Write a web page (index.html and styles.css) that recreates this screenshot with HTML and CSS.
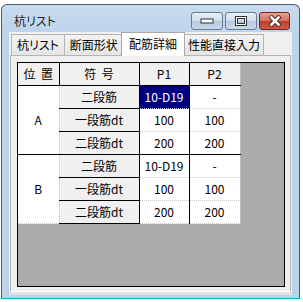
FILE: index.html
```html
<!DOCTYPE html>
<html lang="ja">
<head>
  <meta charset="UTF-8" />
  <title>杭リスト</title>
  <link rel="stylesheet" href="styles.css">
</head>
<body>
  <div class="window">
    <div class="titlebar">
      <div class="title">杭リスト</div>
      <div class="caption-btns">
        <div class="cbtn">
          <svg width="14" height="8" viewBox="0 0 14 8"><rect x="1" y="2" width="12" height="4" fill="#fff" stroke="#333" stroke-width="1"/></svg>
        </div>
        <div class="cbtn">
          <svg width="14" height="10" viewBox="0 0 14 10"><rect x="2.5" y="1.5" width="9" height="7" fill="none" stroke="#333" stroke-width="3"/><rect x="2.5" y="1.5" width="9" height="7" fill="none" stroke="#fff" stroke-width="1"/></svg>
        </div>
        <div class="cbtn close">
          <svg width="16" height="12" viewBox="0 0 16 12"><path d="M3 1 L13 11 M13 1 L3 11" stroke="#4a1a12" stroke-width="4.5"/><path d="M3.5 1.5 L12.5 10.5 M12.5 1.5 L3.5 10.5" stroke="#fff" stroke-width="2.5"/></svg>
        </div>
      </div>
    </div>
    <div class="client">
      <div class="tabs">
        <div class="tab">杭リスト</div>
        <div class="tab">断面形状</div>
        <div class="tab active">配筋詳細</div>
        <div class="tab last">性能直接入力</div>
      </div>
      <div class="panel">
        <div class="grid">
          <table>
            <colgroup>
              <col class="c-pos"><col class="c-sym"><col class="c-p"><col class="c-p2">
            </colgroup>
            <tr class="head">
              <th><span class="wide">位 置</span></th><th><span class="wide">符 号</span></th><th>P1</th><th>P2</th>
            </tr>
            <tr>
              <td class="pos end" rowspan="3">A</td>
              <td class="sym">二段筋</td>
              <td class="p1 sel">10-D19</td>
              <td class="p2">-</td>
            </tr>
            <tr>
              <td class="sym">一段筋dt</td>
              <td class="p1">100</td>
              <td class="p2">100</td>
            </tr>
            <tr class="group-end">
              <td class="sym">二段筋dt</td>
              <td class="p1">200</td>
              <td class="p2">200</td>
            </tr>
            <tr>
              <td class="pos" rowspan="3">B</td>
              <td class="sym">二段筋</td>
              <td class="p1">10-D19</td>
              <td class="p2">-</td>
            </tr>
            <tr>
              <td class="sym">一段筋dt</td>
              <td class="p1">100</td>
              <td class="p2">100</td>
            </tr>
            <tr>
              <td class="sym">二段筋dt</td>
              <td class="p1">200</td>
              <td class="p2">200</td>
            </tr>
          </table>
        </div>
      </div>
    </div>
  </div>
</body>
</html>
```

FILE: styles.css
```css
html, body {
  margin: 0;
  padding: 0;
  background: #ffffff;
  font-family: "Noto Sans CJK JP", sans-serif;
  font-size: 12px;
  font-feature-settings: "palt";
  color: #000;
}
.window {
  margin: 4px 0 0 1px;
  width: 297px;
  height: 293px;
  border: 1px solid #4a5d74;
  border-bottom-color: #1aa6c8;
  border-radius: 6px 6px 0 0;
  background: linear-gradient(#c9dbee, #bcd3ec 30px, #bcd3ec);
  display: flex;
  flex-direction: column;
}
.titlebar {
  height: 27px;
  display: flex;
  justify-content: space-between;
  align-items: flex-start;
  padding: 0 9px 0 12px;
}
.title {
  padding-top: 7px;
  color: #1e1e1e;
  font-size: 12px;
}
.caption-btns {
  display: flex;
  gap: 2px;
  margin-top: 7px;
}
.cbtn {
  width: 30px;
  height: 16px;
  border: 1px solid #6b7c92;
  border-radius: 3px;
  background: linear-gradient(#e8f0f8, #cfdcec 50%, #b7c9df 51%, #c9d9ec);
  display: flex;
  align-items: center;
  justify-content: center;
}
.cbtn.close {
  width: 29px;
  border-color: #6e2a22;
  background: linear-gradient(#e7a293, #d1705c 50%, #bd3f2a 51%, #cc5b44);
}
.client {
  margin: 0 7px 0 7px;
  height: 259px;
  background: #f0f0f0;
  display: flex;
  flex-direction: column;
  padding: 1px 1px 0 1px;
  border-bottom: 3px solid #e3e3e3;
}
.tabs {
  display: flex;
  align-items: flex-end;
  height: 22px;
  padding-left: 1px;
  position: relative;
  z-index: 1;
}
.tab {
  height: 20px;
  line-height: 19px;
  padding: 0 5px;
  border: 1px solid #b4b4b4;
  border-bottom: none;
  margin-right: -1px;
  background: linear-gradient(#f3f3f3, #e5e5e5);
}
.tab.last {
  padding: 0 3px;
}
.tab.active {
  height: 23px;
  line-height: 21px;
  margin: 0 -1px 0 -2px;
  padding: 0 7px;
  background: #ffffff;
  border-color: #a9a9a9;
  position: relative;
  top: 1px;
}
.panel {
  flex: 1;
  border: 1px solid #b4b4b4;
  border-bottom: 1px solid #ffffff;
  background: #f0f0f0;
  padding: 6px 5px 4px 6px;
  display: flex;
}
.grid {
  flex: 1;
  border: 1px solid #000;
  background: #ababab;
}
table {
  border-collapse: collapse;
  table-layout: fixed;
  width: 222px;
  text-align: center;
}
.c-pos { width: 41px; }
.c-sym { width: 80px; }
.c-p { width: 50px; }
.c-p2 { width: 51px; }
th, td {
  height: 22px;
  padding: 0;
  font-weight: normal;
  white-space: nowrap;
  line-height: 18px;
}
th .wide {
  word-spacing: 3px;
}
th {
  background: #f0f0f0;
  border-right: 1px solid #000;
  border-bottom: 1px solid #000;
}
th:last-child {
  border-right: 1px dotted #c8c8c8;
}
td {
  background: #ffffff;
  border-bottom: 1px dotted #c8c8c8;
  border-right: 1px dotted #c8c8c8;
}
td.pos.end {
  border-bottom: 1px solid #000;
}
td.sym {
  background: #f0f0f0;
  border-right: 1px solid #000;
  border-bottom: 1px solid #000;
}
td.p1 {
  border-right: 1px solid #000;
}
tr.group-end td {
  border-bottom: 1px solid #000;
}
td.sel {
  background: #000080;
  color: #ffffff;
}
```
